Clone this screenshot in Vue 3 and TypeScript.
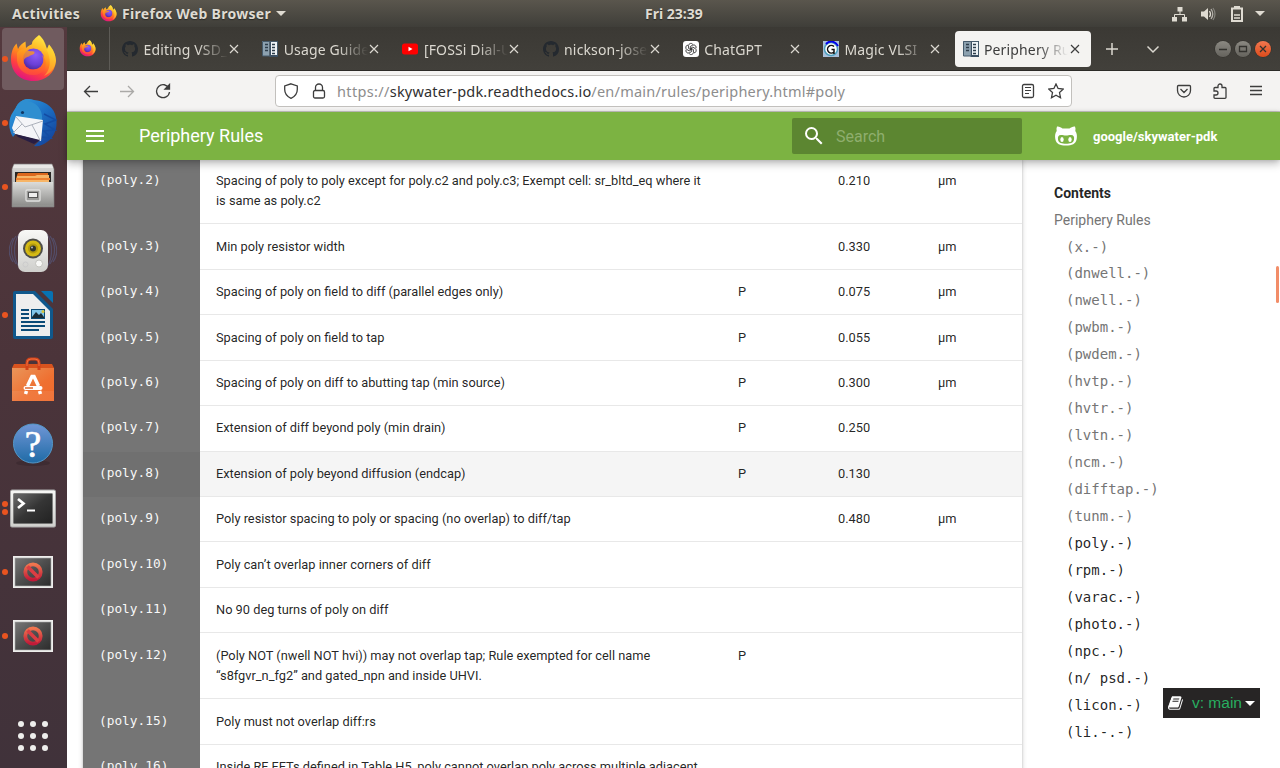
<script setup lang="ts">
interface Tab { title: string; icon: string; active?: boolean }
interface Rule { name: string; text: string; flag?: string; value?: string; unit?: string; hover?: boolean }
interface DockItem { icon: string; dots: number; active?: boolean }

const tabs: Tab[] = [
  { title: 'Editing VSD_', icon: 'github' },
  { title: 'Usage Guide', icon: 'docs' },
  { title: '[FOSSi Dial-U', icon: 'youtube' },
  { title: 'nickson-jose/', icon: 'github' },
  { title: 'ChatGPT', icon: 'chatgpt' },
  { title: 'Magic VLSI', icon: 'magic' },
  { title: 'Periphery Ru', icon: 'docs', active: true },
]

const dock: DockItem[] = [
  { icon: 'firefox', dots: 1, active: true },
  { icon: 'thunderbird', dots: 1 },
  { icon: 'files', dots: 1 },
  { icon: 'rhythmbox', dots: 0 },
  { icon: 'writer', dots: 1 },
  { icon: 'software', dots: 0 },
  { icon: 'help', dots: 0 },
  { icon: 'terminal', dots: 2 },
  { icon: 'blocked', dots: 1 },
  { icon: 'blocked', dots: 1 },
]

const rules: Rule[] = [
  { name: '(poly.2)', text: 'Spacing of poly to poly except for poly.c2 and poly.c3; Exempt cell: sr_bltd_eq where it is same as poly.c2', value: '0.210', unit: 'µm' },
  { name: '(poly.3)', text: 'Min poly resistor width', value: '0.330', unit: 'µm' },
  { name: '(poly.4)', text: 'Spacing of poly on field to diff (parallel edges only)', flag: 'P', value: '0.075', unit: 'µm' },
  { name: '(poly.5)', text: 'Spacing of poly on field to tap', flag: 'P', value: '0.055', unit: 'µm' },
  { name: '(poly.6)', text: 'Spacing of poly on diff to abutting tap (min source)', flag: 'P', value: '0.300', unit: 'µm' },
  { name: '(poly.7)', text: 'Extension of diff beyond poly (min drain)', flag: 'P', value: '0.250' },
  { name: '(poly.8)', text: 'Extension of poly beyond diffusion (endcap)', flag: 'P', value: '0.130', hover: true },
  { name: '(poly.9)', text: 'Poly resistor spacing to poly or spacing (no overlap) to diff/tap', value: '0.480', unit: 'µm' },
  { name: '(poly.10)', text: 'Poly can’t overlap inner corners of diff' },
  { name: '(poly.11)', text: 'No 90 deg turns of poly on diff' },
  { name: '(poly.12)', text: '(Poly NOT (nwell NOT hvi)) may not overlap tap; Rule exempted for cell name “s8fgvr_n_fg2” and gated_npn and inside UHVI.', flag: 'P' },
  { name: '(poly.15)', text: 'Poly must not overlap diff:rs' },
  { name: '(poly.16)', text: 'Inside RF FETs defined in Table H5, poly cannot overlap poly across multiple adjacent' },
]

const read = ['(x.-)', '(dnwell.-)', '(nwell.-)', '(pwbm.-)', '(pwdem.-)', '(hvtp.-)', '(hvtr.-)', '(lvtn.-)', '(ncm.-)', '(difftap.-)', '(tunm.-)']
const unread = ['(poly.-)', '(rpm.-)', '(varac.-)', '(photo.-)', '(npc.-)', '(n/ psd.-)', '(licon.-)', '(li.-.-)']
</script>

<template>
  <div class="desktop">
    <svg class="defs" width="0" height="0">
      <defs>
        <linearGradient id="ffBody" x1=".8" y1="0" x2=".35" y2="1">
          <stop offset="0" stop-color="#fff44f" /><stop offset=".3" stop-color="#ffc02a" />
          <stop offset=".52" stop-color="#ff8a1c" /><stop offset=".75" stop-color="#ff4040" /><stop offset="1" stop-color="#e0157f" />
        </linearGradient>
        <linearGradient id="ffHead" x1="0" y1="0" x2="0" y2="1"><stop offset="0" stop-color="#ffa51c" /><stop offset=".5" stop-color="#ff7a22" /><stop offset="1" stop-color="#ff4a3c" /></linearGradient>
        <radialGradient id="ffGlobe" cx=".6" cy=".3" r=".8"><stop offset="0" stop-color="#8f5cf8" /><stop offset=".6" stop-color="#6a3fd6" /><stop offset="1" stop-color="#44258f" /></radialGradient>
        <linearGradient id="tbBody" x1="0" y1="0" x2="1" y2="1"><stop offset="0" stop-color="#35a4e0" /><stop offset=".5" stop-color="#1c6fc4" /><stop offset="1" stop-color="#123a93" /></linearGradient>
        <linearGradient id="metal" x1="0" y1="0" x2="0" y2="1"><stop offset="0" stop-color="#dcdcda" /><stop offset="1" stop-color="#8f8f8d" /></linearGradient>
        <linearGradient id="white" x1="0" y1="0" x2="0" y2="1"><stop offset="0" stop-color="#f8f8f6" /><stop offset="1" stop-color="#cfcfcc" /></linearGradient>
        <linearGradient id="bag" x1="0" y1="0" x2="1" y2="1"><stop offset="0" stop-color="#e9955a" /><stop offset=".6" stop-color="#ef7031" /><stop offset="1" stop-color="#f06a2c" /></linearGradient>
        <linearGradient id="blue" x1="0" y1="0" x2="0" y2="1"><stop offset="0" stop-color="#7096d6" /><stop offset="1" stop-color="#1f6ba6" /></linearGradient>
        <linearGradient id="screen" x1="0" y1="0" x2="1" y2="1"><stop offset="0" stop-color="#6b6b6b" /><stop offset=".5" stop-color="#353535" /><stop offset="1" stop-color="#222" /></linearGradient>
        <linearGradient id="slate" x1="0" y1="0" x2="1" y2="1"><stop offset="0" stop-color="#777" /><stop offset=".5" stop-color="#4d4d4d" /><stop offset="1" stop-color="#2c2c2c" /></linearGradient>
        <linearGradient id="noGo" x1="0" y1="0" x2="0" y2="1"><stop offset="0" stop-color="#f0764f" /><stop offset="1" stop-color="#c11a38" /></linearGradient>

        <symbol id="firefox" viewBox="0 0 48 48">
          <path d="M30 0C35 4 36 9 38 14L40 9.5C44 14 47 20 47 26C46 38 37 46 24.5 46C11 46 2 37 2 24C2 18 4 12 7.5 8.5L9 14C11 10 14 8 16.5 6.500L17 13C20 10 22 10 23 9C23 5 27 3 30 0Z" fill="url(#ffBody)" />
          <circle cx="24.5" cy="24" r="10.500" fill="url(#ffGlobe)" />
          <path d="M8 18C10 14 14 13 19 15.500C22 17 26 15.500 25.500 17.500C25.500 20 22 19.500 20 21.500C17 22 14 24 15 28C16 34 22 36 27 34C33 33 36 27 33 20C40 26 37 39 26 40C15 41 7 33 8 22Z" fill="url(#ffHead)" opacity=".8" />
          <path d="M31 2C32 8 39 13 40 22C42 29 40 36 35 41C42 38 47 32 47 25C46 18 44 14 40 9.500L38 14C37 9 35 4 31 2Z" fill="#ffe13a" opacity=".4" />
        </symbol>
        <symbol id="thunderbird" viewBox="0 0 48 48">
          <path d="M9 5C14 0 20-1 25 1C34 2 43 6 46 15C50 26 46 38 38 43C34 46 29 48 25 47L34 38L8 33L4 38C-1 30-1 20 4 13Z" fill="url(#tbBody)" />
          <path d="M9 5C13 0 19-1 22 1L19 2C29 4 34 12 33 21L21 29L8 18C6 14 6 8 9 5Z" fill="#2e8ed0" />
          <path d="M35 15L47 21L36 25L46 31L35 32L42 39L31 38" fill="none" stroke="#134ca4" stroke-width="1.500" />
          <path d="M7 17L34 21L32 42L6 35L3 29Z" fill="#f4f5f8" /><path d="M7 18L16 28L34 22M4 34L13 25M23 26L31 41" fill="none" stroke="#a4a9b4" stroke-width=".9" />
          <path d="M6 35L31 41L25 45L9 38Z" fill="#271d44" /><circle cx="13.500" cy="13.500" r="1.600" fill="#103864" />
        </symbol>
        <symbol id="files" viewBox="0 0 48 48">
          <path d="M5 1H43L45 6V44H3V6Z" fill="url(#metal)" stroke="#858583" stroke-width=".6" /><path d="M5 2H43L44 5H4Z" fill="#e8e8e6" />
          <path d="M6 9H42V20H6Z" fill="#292725" /><path d="M9 10H39V19H7L8 12Z" fill="#dc681e" /><path d="M8 13H26L28 12H40V19H7Z" fill="#f7b567" /><path d="M7 16H41" stroke="#ee8131" stroke-width="2" />
          <path d="M4 19H44V42H4Z" fill="url(#metal)" /><rect x="17" y="27" width="14" height="11" rx="1" fill="#9b9b99" stroke="#e1e1df" stroke-width="1.300" /><rect x="19.500" y="29.500" width="9" height="5" fill="#eee" stroke="#555" />
        </symbol>
        <symbol id="rhythmbox" viewBox="0 0 48 48">
          <path d="M7 9C1 17 1 29 7 37M4 11C-1 20-1 28 4 35M10 7C4 16 4 31 10 40M41 9C47 17 47 29 41 37M44 11C49 20 49 28 44 35M38 7C44 16 44 31 38 40" fill="none" stroke="#5a6ba0" stroke-width="1.200" opacity=".45" />
          <rect x="9" y="3" width="30" height="42" rx="7" fill="url(#white)" /><circle cx="24" cy="21.500" r="10" fill="#4d4d49" /><circle cx="24" cy="21.500" r="8" fill="#d4b915" /><circle cx="24" cy="21.500" r="5" fill="#b39a0e" /><circle cx="24" cy="21.500" r="3" fill="#30352d" /><circle cx="23" cy="20.500" r="1" fill="#bbb" />
          <circle cx="30" cy="36.500" r="3.500" fill="#f8f8f6" stroke="#c4c4bf" /><circle cx="16.500" cy="37.500" r="2.500" fill="none" stroke="#ccc" />
        </symbol>
        <symbol id="writer" viewBox="0 0 48 48">
          <path d="M4 2Q4 0 6 0H26L44 18V46Q44 48 42 48H6Q4 48 4 46Z" fill="#10588c" /><path d="M32 0H42Q44 0 44 2V12Z" fill="#0872b2" /><path d="M7 3H24L41 20V45H7Z" fill="#eee" />
          <path d="M12 19H20M12 23H20M12 27H20M12 31H36M12 35H36M12 39H30" stroke="#0b4b77" stroke-width="2" /><rect x="22" y="18" width="14" height="10" fill="#0b4b77" /><rect x="23" y="19" width="12" height="7" fill="#82c5e8" /><path d="M23 26L27 21L30 24L32 22L35 26V27H23Z" fill="#1b2c35" /><circle cx="34" cy="20.500" r="1.500" fill="#dac63b" />
        </symbol>
        <symbol id="software" viewBox="0 0 48 48">
          <path d="M5 8H43L45 12V45H3V12Z" fill="#d8531e" /><path d="M3 12H45V45H3Z" fill="url(#bag)" /><path d="M18 14V7Q18 3 22 3H26Q30 3 30 7V14" fill="none" stroke="#d34319" stroke-width="3" /><path d="M18 10V7Q18 3 22 3H26Q30 3 30 7V10" fill="none" stroke="#ef7042" stroke-width="1" />
          <path d="M18.500 30L23 20.500H25L29.500 30M16.500 38L17.500 35M31.500 38L30.500 35" fill="none" stroke="#fff" stroke-width="3.500" /><path d="M16.500 32H31.500" stroke="#fff" stroke-width="4" stroke-linecap="round" /><path d="M16 32H24" stroke="#dc6128" stroke-width="1.400" /><path d="M3 35H45V45H3Z" fill="#fff" opacity=".07" />
        </symbol>
        <symbol id="help" viewBox="0 0 48 48">
          <ellipse cx="24" cy="43" rx="17" ry="3" fill="#342329" opacity=".5" /><circle cx="24" cy="23.500" r="19.500" fill="url(#blue)" stroke="#5398c8" />
          <text x="24" y="37" text-anchor="middle" class="help-mark">?</text>
        </symbol>
        <symbol id="terminal" viewBox="0 0 48 48">
          <rect x="1.500" y="6" width="45" height="37" rx="1.500" fill="url(#white)" stroke="#aaa" stroke-width="1" /><rect x="4.500" y="9.500" width="39" height="30" fill="#151515" /><path d="M5 10H43V39H5Z" fill="url(#screen)" /><path d="M9 15L14.500 19.500L9 24" fill="none" stroke="#fff" stroke-width="2.700" /><path d="M18 26.500H26" stroke="#fff" stroke-width="2" />
        </symbol>
        <symbol id="blocked" viewBox="0 0 48 48">
          <rect x="4" y="8" width="40" height="32" fill="#eeeeec" /><rect x="6" y="10" width="36" height="28" fill="url(#slate)" stroke="#aaa" stroke-width=".6" /><circle cx="24" cy="24" r="7.700" fill="none" stroke="url(#noGo)" stroke-width="3.800" /><path d="M18.500 18.500L29.500 29.500" stroke="#dc3d43" stroke-width="3.600" />
        </symbol>
        <symbol id="github" viewBox="0 0 16 16"><path fill="#24292f" d="M8 0C3.580 0 0 3.580 0 8c0 3.540 2.290 6.530 5.470 7.590.4.070.55-.17.55-.38 0-.19-.01-.82-.01-1.490-2.010.37-2.530-.49-2.690-.94-.09-.23-.48-.94-.82-1.130-.28-.15-.68-.52-.01-.53.63-.01 1.080.58 1.230.82.720 1.210 1.870.87 2.330.66.070-.52.280-.87.510-1.070-1.780-.2-3.640-.89-3.640-3.950 0-.87.310-1.590.82-2.150-.08-.2-.36-1.020.08-2.120 0 0 .67-.21 2.200.82.640-.18 1.320-.27 2-.27s1.360.09 2 .27c1.530-1.040 2.200-.82 2.200-.82.440 1.100.160 1.920.080 2.120.510.560.820 1.270.820 2.150 0 3.070-1.870 3.750-3.650 3.950.290.250.540.730.540 1.480 0 1.070-.01 1.930-.01 2.200 0 .210.150.460.550.380A8.010 8.010 0 0 0 16 8c0-4.420-3.580-8-8-8Z" /></symbol>
        <symbol id="docs" viewBox="0 0 16 16"><path d="M0 0H7.500V15H0Z" fill="#8ca1af" /><path d="M8 0H16V16H8Z" fill="#33475a" /><path d="M9 1H15V14H9Z" fill="#eef3f6" /><path d="M.5 .5H15.500V15H.5ZM8 0V16" fill="none" stroke="#465b6c" stroke-width="1" /><path d="M3 3.500H6M3 6.500H6M3 9.500H6M10 3.500H13M10 6.500H13M10 9.500H13M10 12.500H13" stroke="#2e3e4b" stroke-width="1.500" /></symbol>
        <symbol id="youtube" viewBox="0 0 16 16"><rect y="2.500" width="16" height="11" rx="2.500" fill="#f00" /><path d="M6.500 5.800L10.500 8L6.500 10.200Z" fill="#fff" /></symbol>
        <symbol id="chatgpt" viewBox="0 0 16 16"><rect width="16" height="16" rx="3" fill="#fff" /><g fill="none" stroke="#222" stroke-width=".75"><path d="M8 8.800L5.500 7.400V4.600A2.400 2.400 0 0 1 9.900 3.500" /><path d="M8 8.800L5.500 7.400V4.600A2.400 2.400 0 0 1 9.900 3.500" transform="rotate(60 8 8)" /><path d="M8 8.800L5.500 7.400V4.600A2.400 2.400 0 0 1 9.900 3.500" transform="rotate(120 8 8)" /><path d="M8 8.800L5.500 7.400V4.600A2.400 2.400 0 0 1 9.900 3.500" transform="rotate(180 8 8)" /><path d="M8 8.800L5.500 7.400V4.600A2.400 2.400 0 0 1 9.900 3.500" transform="rotate(240 8 8)" /><path d="M8 8.800L5.500 7.400V4.600A2.400 2.400 0 0 1 9.900 3.500" transform="rotate(300 8 8)" /></g></symbol>
        <symbol id="magic" viewBox="0 0 16 16"><rect width="16" height="16" fill="#a9bfda" /><circle cx="8" cy="8" r="6.500" fill="#fff" stroke="#4d9fbd" stroke-width="1.500" /><path d="M3 3C6-.5 12-.5 15 5" fill="none" stroke="#00e" stroke-width="2" /><path d="M11 5.500A3.800 3.800 0 1 0 11 11V8.500H8.500M11 8.500V13" fill="none" stroke="#111" stroke-width="1.500" /></symbol>
      </defs>
    </svg>

    <header class="topbar">
      <span class="activities">Activities</span>
      <svg class="app-icon" width="17" height="17"><use href="#firefox" /></svg>
      <span class="app-name">Firefox Web Browser</span>
      <i class="caret"></i>
      <span class="clock">Fri 23:39</span>
      <div class="status">
        <svg width="16" height="16" viewBox="0 0 16 16" fill="#dfdbd2"><path d="M5.500 1H10.500V5.500H5.500ZM0 11H5V15.500H0ZM10 11H15V15.500H10Z" /><path d="M8 5V8.500M2.500 11V8.500H12.500V11" fill="none" stroke="#dfdbd2" /></svg>
        <svg width="16" height="16" viewBox="0 0 16 16" fill="#dfdbd2"><path d="M1 5.500H4L8 2V14L4 10.500H1Z" /><path d="M9.500 5Q11.500 8 9.500 11" fill="none" stroke="#dfdbd2" stroke-width="1.300" /><path d="M11 3Q14.500 8 11 13" fill="none" stroke="#b5b2ab" stroke-width="1.300" /><path d="M13 2Q17 8 13 14" fill="none" stroke="#85837d" stroke-width="1.200" /></svg>
        <svg width="16" height="16" viewBox="0 0 16 16"><path d="M3 2.500H13V15H3Z" fill="none" stroke="#dfdbd2" stroke-width="2" /><path d="M5 0H11V2H5Z" fill="#dfdbd2" /><path d="M5 9H11M5 12H11" stroke="#dfdbd2" stroke-width="1.700" /></svg>
        <i class="caret"></i>
      </div>
    </header>

    <div class="workspace">
      <nav class="dock">
        <div v-for="(item, i) in dock" :key="i" class="dock-item" :class="{ active: item.active }">
          <span class="dots"><i v-for="n in item.dots" :key="n"></i></span>
          <svg width="48" height="48"><use :href="'#' + item.icon" /></svg>
        </div>
        <div class="app-grid"><i v-for="n in 9" :key="n"></i></div>
      </nav>

      <main class="browser">
        <div class="tabstrip">
          <div class="pinned"><svg width="17" height="17"><use href="#firefox" /></svg></div>
          <div v-for="tab in tabs" :key="tab.title" class="tab" :class="{ active: tab.active }">
            <svg width="16" height="16"><use :href="'#' + tab.icon" /></svg>
            <span class="tab-title">{{ tab.title }}</span>
            <svg class="close" width="10" height="10" viewBox="0 0 10 10"><path d="M1 1L9 9M9 1L1 9" /></svg>
          </div>
          <svg class="plus" width="14" height="14" viewBox="0 0 14 14"><path d="M7 1V13M1 7H13" /></svg>
          <svg class="list" width="14" height="14" viewBox="0 0 14 14"><path d="M1.500 4.500L7 10L12.500 4.500" /></svg>
          <div class="window-buttons">
            <svg viewBox="0 0 16 16"><path d="M4 8.500H12" /></svg>
            <svg viewBox="0 0 16 16"><path d="M4.500 5.500H11.500V10.500H4.500Z" /></svg>
            <svg class="quit" viewBox="0 0 16 16"><path d="M5 5L11 11M11 5L5 11" /></svg>
          </div>
        </div>

        <div class="toolbar">
          <svg class="tool" viewBox="0 0 16 16"><path d="M15 8.500H1.500M7 3L1.500 8.500L7 14" /></svg>
          <svg class="tool off" viewBox="0 0 16 16"><path d="M1 8.500H14.500M9 3L14.500 8.500L9 14" /></svg>
          <svg class="tool" viewBox="0 0 16 16"><path d="M14 5.500A6.500 6.500 0 1 0 14.500 9" /><path d="M14.500 1.500V6H10Z" fill="#3d3d3d" /></svg>
          <div class="urlbar">
            <svg class="tool" viewBox="0 0 16 16"><path d="M8 .8L14.300 3V6.500C14.300 10.500 12 13.500 8 15.300C4 13.500 1.700 10.500 1.700 6.500V3Z" /></svg>
            <svg class="tool lock" viewBox="0 0 16 16"><rect x="2.500" y="7.500" width="11" height="7.500" rx="1.500" /><path d="M4.500 7.500V4.500A3.500 3.500 0 0 1 11.500 4.500V7.500" /></svg>
            <span class="url"><span class="scheme">https://</span><b>skywater-pdk.readthedocs.io</b><span class="path">/en/main/rules/periphery.html#poly</span></span>
            <svg class="tool reader" viewBox="0 0 16 16"><rect x="2.500" y="1.500" width="11" height="13" rx="1.500" /><path d="M5 4.500H11M5 7.500H11M5 10.500H9" stroke-width="1.100" /></svg>
            <svg class="tool" viewBox="0 0 16 16"><path d="M8 1L10.100 5.500L15.200 6.100L11.500 9.600L12.500 14.700L8 12.200L3.500 14.700L4.500 9.600L.8 6.100L5.900 5.500Z" /></svg>
          </div>
          <div class="tool-group">
            <svg class="tool" viewBox="0 0 16 16"><path d="M2.500 2.500H13.500Q14.500 2.500 14.500 3.500V7.500A6.500 6.500 0 0 1 1.500 7.500V3.500Q1.500 2.500 2.500 2.500ZM4.500 6L8 9.500L11.500 6" /></svg>
            <svg class="tool" viewBox="0 0 16 16"><path d="M2 5.500Q2 4.500 3 4.500H6V3A2 2 0 0 1 10 3V4.500H13Q14 4.500 14 5.500V14.500Q14 15.300 13 15.300H3Q2 15.300 2 14.500V12H4A2 2 0 0 0 4 8H2Z" /></svg>
            <svg class="tool" viewBox="0 0 16 16"><path d="M2 3.500H14M2 7.500H14M2 11.500H14" /></svg>
          </div>
        </div>

        <div class="site-header">
          <i class="burger"></i>
          <h1>Periphery Rules</h1>
          <div class="search">
            <svg width="24" height="24" viewBox="0 0 24 24" fill="#fff"><path d="M9.500 3A6.500 6.500 0 0 1 16 9.500c0 1.610-.59 3.090-1.560 4.230l.27.27h.79l5 5-1.500 1.500-5-5v-.79l-.27-.27A6.516 6.516 0 0 1 9.500 16 6.500 6.500 0 0 1 3 9.500 6.500 6.500 0 0 1 9.500 3m0 2C7 5 5 7 5 9.500S7 14 9.500 14 14 12 14 9.500 12 5 9.500 5Z" /></svg>
            <span>Search</span>
          </div>
          <div class="repo">
            <svg width="24" height="24" viewBox="0 0 24 24"><path fill="#fff" d="M3 2.500C5 2.200 7 3.300 8.500 4.500H15.500C17 3.300 19 2.200 21 2.500C21.600 4 21.700 5.500 21.300 7C23 9 23.200 12 22.700 15C21.800 20 18 21.500 12 21.500S2.200 20 1.300 15C.8 12 1 9 2.700 7C2.300 5.500 2.400 4 3 2.500Z" /><path fill="#7cb342" d="M7 11C9 11 10 11.500 12 11.500S15 11 17 11C19.500 11 20.500 13 20 15.500C19.500 19 16 19.800 12 19.800S4.500 19 4 15.500C3.500 13 4.500 11 7 11Z" /><ellipse cx="8" cy="15.500" rx="1.700" ry="2.500" fill="#fff" /><ellipse cx="16" cy="15.500" rx="1.700" ry="2.500" fill="#fff" /></svg>
            <span>google/skywater-pdk</span>
          </div>
        </div>

        <div class="page">
          <article class="card">
            <div v-for="rule in rules" :key="rule.name" class="rule" :class="{ hover: rule.hover }">
              <code>{{ rule.name }}</code>
              <span>{{ rule.text }}</span>
              <span>{{ rule.flag }}</span>
              <span>{{ rule.value }}</span>
              <span>{{ rule.unit }}</span>
            </div>
          </article>
          <aside class="toc">
            <strong>Contents</strong>
            <a class="read">Periphery Rules</a>
            <a v-for="entry in read" :key="entry" class="entry read">{{ entry }}</a>
            <a v-for="entry in unread" :key="entry" class="entry">{{ entry }}</a>
          </aside>
          <i class="scroll-thumb"></i>
          <div class="version">
            <svg width="16" height="16" viewBox="0 0 1792 1792"><path fill="#fcfcfc" d="M1639 478q40 57 18 129l-275 906q-19 64-76.500 107.500t-122.500 43.500h-923q-77 0-148.500-53.500t-99.500-131.500q-24-67-2-127 0-4 3-27t4-37q1-8-3-21.500t-3-19.500q2-11 8-21t16.500-23.500 16.500-23.500q23-38 45-91.500t30-91.500q3-10 .5-30t-.5-28q3-11 17-28t17-23q21-36 42-92t25-90q1-9-2.500-32t.5-28q4-13 22-30.500t22-22.500q19-26 42.500-84.500t27.500-96.500q1-8-3-25.500t-2-26.500q2-8 9-18t18-23 17-21q8-12 16.500-30.500t15-35 16-36 19.500-32 26.500-23.500 36-11.500 47.500 5.500l-1 3q38-9 51-9h761q74 0 114 56t18 130l-274 906q-36 119-71.500 153.500t-128.500 34.500h-869q-27 0-38 15-11 16-1 43 24 70 144 70h923q29 0 56-15.500t35-41.500l300-987q7-22 5-57 38 15 59 43zm-1064 2q-4 13 2 22.500t20 9.500h608q13 0 25.500-9.500t16.500-22.500l21-64q4-13-2-22.500t-20-9.500h-608q-13 0-25.500 9.500t-16.500 22.500zm-83 256q-4 13 2 22.500t20 9.500h608q13 0 25.500-9.500t16.500-22.500l21-64q4-13-2-22.500t-20-9.500h-608q-13 0-25.500 9.500t-16.500 22.500z" /></svg>
            <span>v: main</span>
            <i class="caret"></i>
          </div>
        </div>
      </main>
    </div>
  </div>
</template>

<style>
body { margin: 0; overflow: hidden; }
</style>

<style scoped>
* { box-sizing: border-box; }
.desktop { width: 1280px; height: 768px; overflow: hidden; display: flex; flex-direction: column; font-family: "Noto Sans", sans-serif; }
.defs { position: absolute; }
svg { display: block; flex: none; }
i { display: block; flex: none; }
.help-mark { font: 37px "Liberation Serif", serif; fill: #fff; stroke: #fff; stroke-width: .7; }

.topbar { height: 27px; flex: none; position: relative; display: flex; align-items: center; padding-left: 12px; background: linear-gradient(#5a564d, #3f3e39); color: #dfdbd2; font-size: 14px; font-weight: 700; text-shadow: 0 1px 1px #2a2926; white-space: nowrap; }
.activities { width: 88px; letter-spacing: .3px; }
.app-icon { margin-right: 5px; }
.app-name { width: 149px; letter-spacing: .3px; }
.caret { width: 0; height: 0; border: 5px solid transparent; border-top-color: #dfdbd2; border-bottom: 0; }
.topbar > .caret { margin-left: 5px; }
.clock { position: absolute; left: 645px; letter-spacing: 0; }
.status { margin-left: auto; display: flex; align-items: center; gap: 12.500px; padding-right: 15px; }
.status svg { position: relative; left: 2px; }

.workspace { flex: 1; display: flex; min-height: 0; }
.dock { width: 67px; flex: none; background: linear-gradient(#54393e, #4b343a 45%, #40323a); }
.dock-item { height: 64.1px; position: relative; display: flex; align-items: center; justify-content: center; }
.dock-item svg { position: relative; margin-right: 1px; overflow: visible; }
.dock-item.active::before { content: ""; position: absolute; left: 2px; top: 1px; width: 62px; height: 62px; border-radius: 4px; background: #705b5f; }
.dots { position: absolute; left: 2px; top: 0; bottom: 0; display: flex; flex-direction: column; justify-content: center; gap: 2px; }
.dots i { width: 6px; height: 6px; border-radius: 50%; background: #e95420; }
.app-grid { display: grid; grid-template-columns: repeat(3, 6px); gap: 6px; margin: 53px 0 0 18px; }
.app-grid i { width: 6px; height: 6px; border-radius: 50%; background: #eeeeec; }

.browser { flex: 1; min-width: 0; display: flex; flex-direction: column; }
.tabstrip { height: 44px; flex: none; display: flex; align-items: center; background: linear-gradient(#3b3934, #42403b); border-bottom: 1px solid #2c2b28; }
.pinned { width: 43px; height: 43px; padding: 13px 0 0 12px; border-right: 1px solid #5d5b56; }
.tab { width: 140.200px; height: 36px; padding-left: 12px; display: flex; align-items: center; color: #dbd8d0; font-size: 14px; letter-spacing: .15px; }
.tab-title { width: 84px; margin: 1px 1.500px 0 5.500px; white-space: nowrap; overflow: hidden; mask-image: linear-gradient(90deg, #000 54px, transparent 84px); }
.close { stroke: #dbd8d0; stroke-width: 1.2; }
.tab.active { width: 136px; margin-left: 3.800px; padding-left: 8px; border-radius: 4px; background: #f4f3f1; color: #3d3d3d; }
.tab.active .tab-title { margin: 1px 2px 0 5px; }
.tab.active .close { stroke: #3d3d3d; }
.plus, .list { stroke: #dbd8d0; fill: none; stroke-width: 1.5; }
.plus { margin-left: 14px; }
.list { margin-left: 27px; }
.window-buttons { margin-left: auto; padding-right: 9px; display: flex; gap: 4px; }
.window-buttons svg { width: 16px; height: 16px; border-radius: 50%; background: linear-gradient(#8b8982, #65635d); fill: none; stroke: #33322e; stroke-width: 1.3; box-shadow: 0 0 0 .5px #302f2b; }
.window-buttons .quit { background: linear-gradient(#f2774f, #dd4c1c); }

.toolbar { height: 41px; flex: none; display: flex; align-items: center; background: #f4f3f2; border-bottom: 1px solid #c8c6c3; padding-left: 16px; }
.tool { width: 16px; height: 16px; fill: none; stroke: #3d3d3d; stroke-width: 1.3; }
.toolbar > .tool { margin-right: 20px; }
.toolbar > .off { stroke: #aaa9a7; }
.urlbar { width: 797px; height: 32px; margin-left: 84px; display: flex; align-items: center; border: 1px solid #c2c0bd; border-radius: 4px; background: #fff; padding: 0 7px; }
.lock { margin-left: 12px; }
.url { margin-left: 10px; flex: 1; font-size: 14.500px; color: #8d8d8d; white-space: nowrap; display: flex; letter-spacing: .35px; }
.url b { font-weight: 400; color: #303030; letter-spacing: .19px; }
.url .path { letter-spacing: .22px; }
.reader { margin-right: 12px; }
.tool-group { margin: 0 16px 0 auto; display: flex; gap: 20px; }

.site-header { height: 48px; flex: none; position: relative; z-index: 2; display: flex; align-items: center; background: #7cb342; color: #fff; font-family: Roboto, sans-serif; box-shadow: 0 0 4px rgba(0,0,0,.14), 0 4px 8px rgba(0,0,0,.25); }
.burger { width: 18px; height: 12px; margin-left: 19px; border-top: 2px solid #fff; border-bottom: 2px solid #fff; background: linear-gradient(#fff, #fff) 0 3px / 18px 2px no-repeat; }
h1 { margin: 0 0 0 35px; width: 653px; font-size: 18px; line-height: 48px; font-weight: 400; }
.search { width: 230px; height: 36px; border-radius: 2px; background: #5c8631; display: flex; align-items: center; font-size: 16px; color: #8fae6e; }
.search svg { margin: 0 10px; }
.repo { margin-left: 32px; display: flex; align-items: center; font-size: 13px; font-weight: 700; }
.repo span { margin-left: 15px; }

.page { flex: 1; min-height: 0; position: relative; display: flex; background: #fff; overflow: hidden; font-family: Roboto, sans-serif; }
.card { width: 939px; height: 700px; flex: none; margin: -1.760px 0 0 16px; box-shadow: 0 2px 2px rgba(0,0,0,.14), 0 1px 5px rgba(0,0,0,.2); }
.rule { display: grid; grid-template-columns: 117px 522px 100px 100px 100px; font-size: 12.800px; line-height: 20.480px; color: rgba(0,0,0,.87); }
.rule > * { padding: 12.400px 16px 11.600px; border-bottom: 1px solid #e8e8e8; }
.rule code { padding: 11.400px 16px 12.600px; background: #757575; border-bottom-color: #757575; color: #f8f8f8; font-family: "DejaVu Sans Mono", monospace; }
.rule.hover > span { background: #f5f5f5; }
.rule.hover code { background: #707070; border-color: #707070; }
.toc { padding: 20px 0 0 32px; display: flex; flex-direction: column; font-size: 14px; line-height: 27px; color: rgba(0,0,0,.87); white-space: pre; }
.toc .read { color: #757575; }
.toc .entry { padding-left: 12px; font-family: "DejaVu Sans Mono", monospace; }
.toc .entry:nth-child(3) { height: 26px; }
.scroll-thumb { position: absolute; right: 1px; top: 106px; width: 3px; height: 37px; border-radius: 2px; background: #f28d68; }
.version { position: absolute; right: 20px; bottom: 50px; width: 97px; height: 30px; padding-left: 5px; display: flex; align-items: center; background: #272525; color: #27ae60; font: 15.500px "Liberation Sans", sans-serif; }
.version span { margin: 0 3px 0 8px; white-space: nowrap; }
.version .caret { border-top-color: #fff; }
</style>
